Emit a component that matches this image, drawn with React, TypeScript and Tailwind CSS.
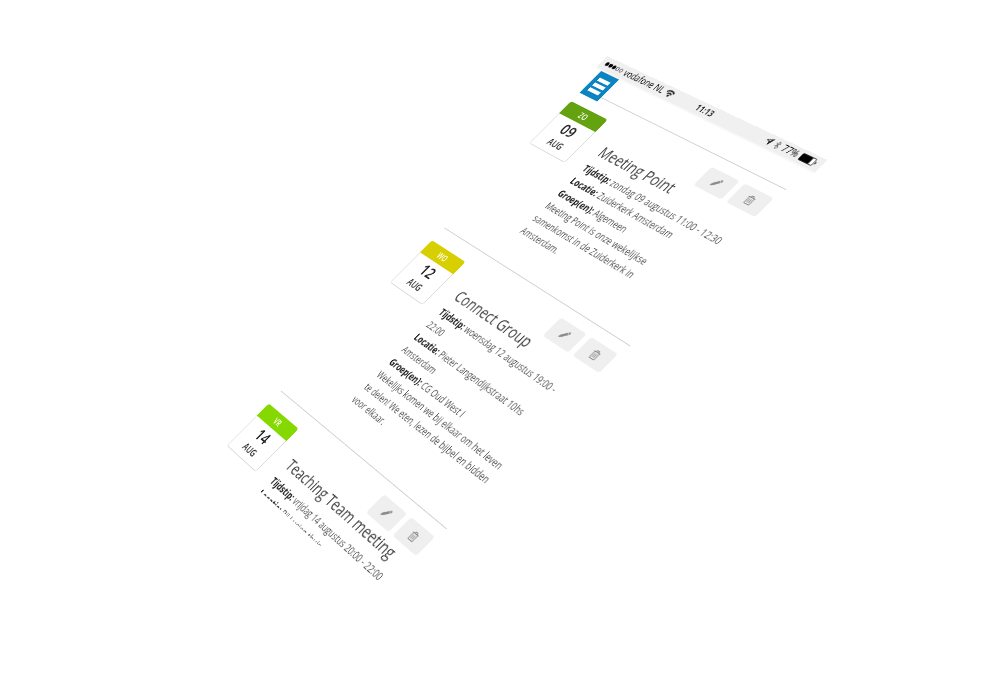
import React from "react";
import { FaRegTrashAlt } from "react-icons/fa";

type Agenda = {
  weekday: string;
  day: string;
  month: string;
  tint: string;
  title: string;
  time: string;
  place: string;
  group: string;
  text: string;
};

const events: Agenda[] = [
  {
    weekday: "ZO", day: "09", month: "AUG", tint: "bg-[#65a20f]",
    title: "Meeting Point",
    time: "zondag 09 augustus 11:00 - 12:30",
    place: "Zuiderkerk Amsterdam",
    group: "Algemeen",
    text: "Meeting Point is onze wekelijkse samenkomst in de Zuiderkerk in Amsterdam.",
  },
  {
    weekday: "WO", day: "12", month: "AUG", tint: "bg-[#d7cf00]",
    title: "Connect Group",
    time: "woensdag 12 augustus 19:00 - 22:00",
    place: "Pieter Langendijkstraat 10hs Amsterdam",
    group: "CG Oud West I",
    text: "Wekelijks komen we bij elkaar om het leven te delen! We eten, lezen de bijbel en bidden voor elkaar.",
  },
  {
    weekday: "VR", day: "14", month: "AUG", tint: "bg-[#86d900]",
    title: "Teaching Team meeting",
    time: "vrijdag 14 augustus 20:00 - 22:00",
    place: "Bij Lucien thuis",
    group: "Teaching Team",
    text: "",
  },
];

function Pencil() {
  return (
    <svg viewBox="0 0 16 16" className="size-3.5" fill="#8a8a8a" aria-hidden="true">
      <path d="M11.6 1.6a1.4 1.4 0 0 1 2 0l.8.8a1.4 1.4 0 0 1 0 2l-1 1-2.800-2.800zM10 3.200 12.800 6 5.600 13.200 1.600 14.400 2.800 10.400z" />
    </svg>
  );
}

function StatusBar() {
  return (
    <div className="flex h-5 items-center border-b-2 border-[#f8f8f8] bg-[#f0f0f0] px-2 text-xs text-black">
      <div className="flex flex-1 items-center gap-1">
        <svg viewBox="0 0 32 6" className="h-1.5 w-8" aria-hidden="true">
          <circle cx="3" cy="3" r="2.800" />
          <circle cx="9.500" cy="3" r="2.800" />
          <circle cx="16" cy="3" r="2.800" />
          <circle cx="22.500" cy="3" r="2.300" fill="none" stroke="#000" strokeWidth=".7" />
          <circle cx="29" cy="3" r="2.300" fill="none" stroke="#000" strokeWidth=".7" />
        </svg>
        <span>vodafone NL</span>
        <svg viewBox="0 0 14 11" className="h-3 w-3.5" fill="none" stroke="#222" strokeWidth="2" aria-hidden="true">
          <path d="M1 4a8.500 8.500 0 0 1 12 0M3.300 6.600a5.200 5.200 0 0 1 7.400 0" />
          <path d="M7 10.600 4.900 8.300a3 3 0 0 1 4.200 0z" fill="#222" stroke="none" />
        </svg>
      </div>
      <span className="text-[11px] font-semibold">11:13</span>
      <div className="flex flex-1 items-center justify-end gap-1">
        <svg viewBox="0 0 12 12" className="size-2.5" fill="none" stroke="#222" aria-hidden="true">
          <path d="M11 1 7 11 6 6 1 5z" />
          <path d="M11 1 7 11 6 6z" fill="#222" />
        </svg>
        <svg viewBox="0 0 8 12" className="h-3 w-2" fill="none" stroke="#666" aria-hidden="true">
          <path d="M1 3.500 7 8.500 4 11V1l3 2.500-6 5" />
        </svg>
        <span>77%</span>
        <svg viewBox="0 0 26 11" className="h-3 w-6" aria-hidden="true">
          <rect x=".5" y=".5" width="22" height="10" rx="2" fill="#fff" stroke="#000" strokeWidth=".8" />
          <rect x="1" y="1" width="16" height="9" rx="1" />
          <path d="M24 3.500c2 .5 2 3.500 0 4z" />
        </svg>
      </div>
    </div>
  );
}

function Detail({ label, children }: { label: string; children: React.ReactNode }) {
  return (
    <p>
      <strong className="font-bold text-[#1a1a1a]">{label}:</strong> {children}
    </p>
  );
}

function Event({ item }: { item: Agenda }) {
  return (
    <article className="flex gap-[30px] border-t border-[#cfcfcf] pb-9">
      <div className="mt-5 flex h-[70px] w-[70px] shrink-0 flex-col rounded-sm border border-[#d8d8d8] text-center font-semibold text-[#222]">
        <div className={`-mx-px -mt-px rounded-t-sm text-[10px] leading-5 text-white ${item.tint}`}>{item.weekday}</div>
        <div className="text-xl leading-7">{item.day}</div>
        <div className="text-xs leading-4">{item.month}</div>
      </div>
      <div className="min-w-0 flex-1 pr-1">
        <div className="flex justify-end gap-2 pt-3.5">
          <button type="button" aria-label="Bewerken" className="flex h-7 w-[46px] items-center justify-center rounded bg-[#efefef]">
            <Pencil />
          </button>
          <button type="button" aria-label="Verwijderen" className="flex h-7 w-[46px] items-center justify-center rounded bg-[#efefef]">
            <FaRegTrashAlt className="size-3 text-[#888]" />
          </button>
        </div>
        <h2 className="mb-0.5 whitespace-nowrap text-xl leading-[30px] text-[#444]">{item.title}</h2>
        <div className="text-xs leading-5 text-[#555]">
          <Detail label="Tijdstip">{item.time}</Detail>
          <Detail label="Locatie">{item.place}</Detail>
          <Detail label="Groep(en)">{item.group}</Detail>
          <p>{item.text}</p>
        </div>
      </div>
    </article>
  );
}

export default function App() {
  return (
    <main className="min-h-screen overflow-hidden bg-white font-['Open_Sans','Noto_Sans',sans-serif]">
      <div className="h-[655px] w-[375px] origin-top-left overflow-hidden [transform:matrix3d(0.3318,0.2277,0,-0.00031,-0.6,0.6,0,0,0,0,1,0,607,56,0,1)]">
        <StatusBar />
        <header className="flex h-[29px] px-3">
          <button type="button" aria-label="Menu" className="relative z-10 flex h-9 w-[34px] flex-col items-center justify-center gap-[3px] bg-[#0b84c1]">
            <span className="h-[5px] w-5 bg-white" />
            <span className="h-[5px] w-5 bg-white" />
            <span className="h-[5px] w-5 bg-white" />
          </button>
        </header>
        <div className="px-3">
          {events.map((item) => (
            <Event key={item.day} item={item} />
          ))}
        </div>
      </div>
    </main>
  );
}
